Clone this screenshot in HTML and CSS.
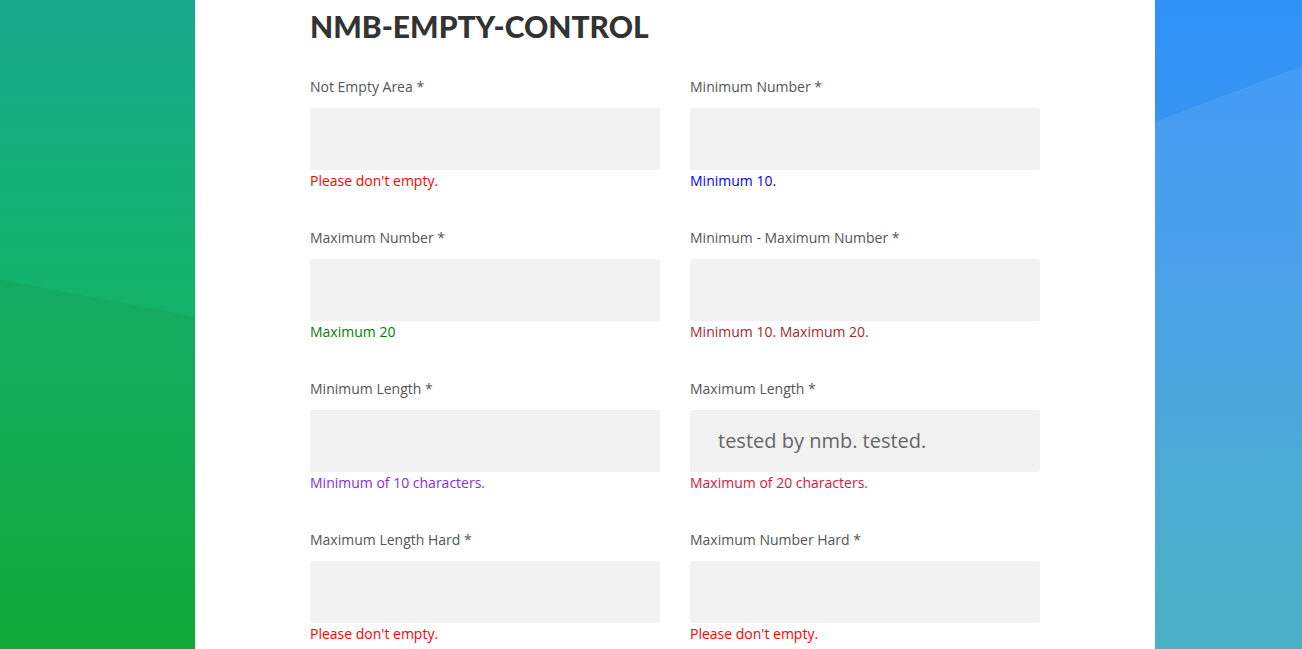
FILE: index.html
```html
<!DOCTYPE html>
<html>
<head>
<meta charset="utf-8">
<link rel="stylesheet" href="styles.css">
</head>
<body>
<main class="panel">
  <h1 class="title">NMB-EMPTY-CONTROL</h1>
  <div class="grid">
    <div class="field">
      <label class="label">Not Empty Area *</label>
      <div class="input"></div>
      <div class="msg red">Please don't empty.</div>
    </div>
    <div class="field">
      <label class="label">Minimum Number *</label>
      <div class="input"></div>
      <div class="msg blue">Minimum 10.</div>
    </div>
    <div class="field">
      <label class="label">Maximum Number *</label>
      <div class="input"></div>
      <div class="msg green">Maximum 20</div>
    </div>
    <div class="field">
      <label class="label">Minimum - Maximum Number *</label>
      <div class="input"></div>
      <div class="msg brown">Minimum 10. Maximum 20.</div>
    </div>
    <div class="field">
      <label class="label">Minimum Length *</label>
      <div class="input"></div>
      <div class="msg purple">Minimum of 10 characters.</div>
    </div>
    <div class="field">
      <label class="label">Maximum Length *</label>
      <div class="input">tested by nmb. tested.</div>
      <div class="msg crimson">Maximum of 20 characters.</div>
    </div>
    <div class="field">
      <label class="label">Maximum Length Hard *</label>
      <div class="input"></div>
      <div class="msg red">Please don't empty.</div>
    </div>
    <div class="field">
      <label class="label">Maximum Number Hard *</label>
      <div class="input"></div>
      <div class="msg red">Please don't empty.</div>
    </div>
  </div>
</main>
</body>
</html>
```

FILE: styles.css
```css
html, body {
  margin: 0;
  padding: 0;
  height: 100%;
  overflow: hidden;
}
body {
  font-family: "Open Sans", "Liberation Sans", sans-serif;
  background:
    linear-gradient(190.8deg, rgba(0,0,0,0) 0, rgba(0,0,0,0) 311px, rgba(40,110,50,0.12) 311px) left top / 195px 100% no-repeat,
    linear-gradient(180deg, #17a98c 0%, #12b466 50%, #0db23a 100%) left top / 195px 100% no-repeat,
    linear-gradient(-20.8deg, rgba(255,255,255,0.08) 0, rgba(255,255,255,0.08) 545px, rgba(0,0,0,0) 545px) right top / 147px 100% no-repeat,
    linear-gradient(180deg, #2f92f8 0%, #3d98e8 40%, #3ca6cc 80%, #3aaabf 100%) right top / 147px 100% no-repeat,
    #fff;
}
.panel {
  width: 730px;
  height: 649px;
  margin: 0 0 0 195px;
  padding: 0 115px;
  background: #fff;
  box-sizing: content-box;
}
.title {
  margin: 0;
  padding-top: 8px;
  font-family: "Lato", "Liberation Sans", sans-serif;
  font-weight: 900;
  font-size: 30px;
  line-height: 36px;
  letter-spacing: 0;
  color: #333;
}
.grid {
  margin-top: 33px;
  display: grid;
  grid-template-columns: 350px 350px;
  column-gap: 30px;
  row-gap: 38px;
}
.field {
  display: flex;
  flex-direction: column;
}
.label {
  font-size: 14px;
  line-height: 20px;
  color: #555;
  margin-bottom: 11px;
}
.input {
  height: 62px;
  background: #f2f2f2;
  border-radius: 2px;
  box-sizing: border-box;
  padding-left: 28px;
  font-size: 20px;
  line-height: 62px;
  color: #666;
}
.msg {
  margin-top: 2px;
  font-size: 14px;
  line-height: 18px;
}
.red { color: #ff0000; }
.blue { color: #0000ff; }
.green { color: #008000; }
.brown { color: #a52a2a; }
.purple { color: #8a2be2; }
.crimson { color: #dc143c; }
```
